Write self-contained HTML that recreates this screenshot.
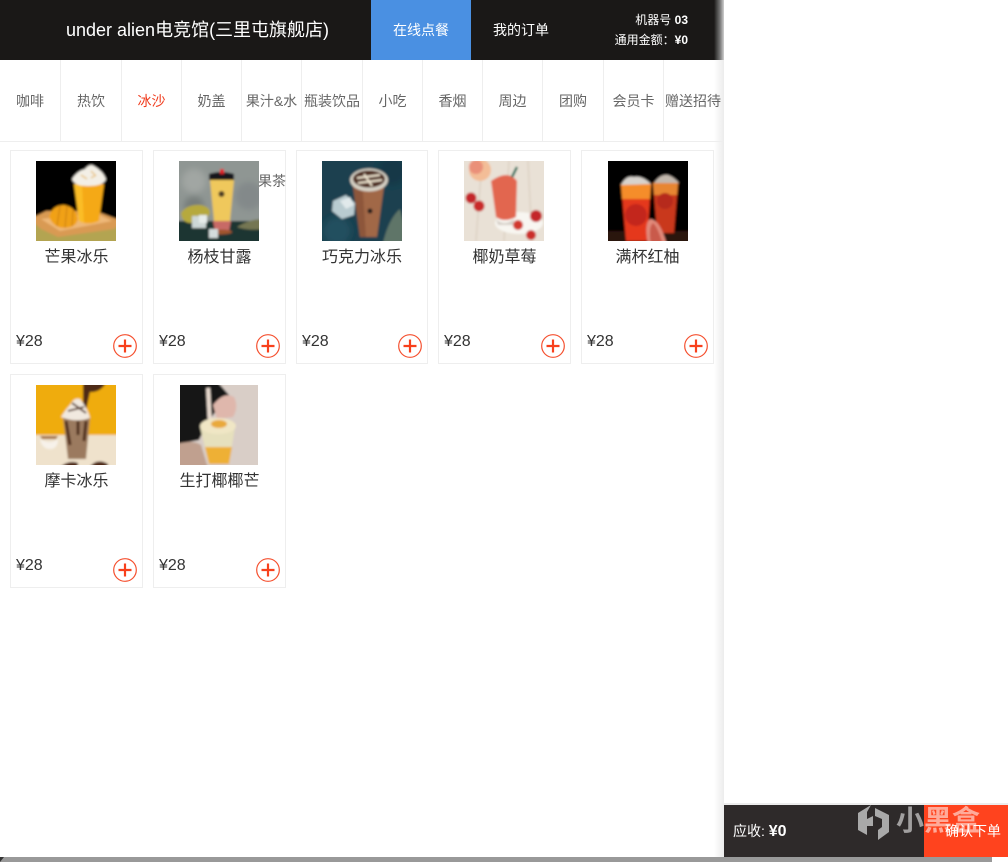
<!DOCTYPE html>
<html lang="zh">
<head>
<meta charset="utf-8">
<title>under alien</title>
<style>
*{box-sizing:border-box;margin:0;padding:0}
html,body{width:1008px;height:862px;overflow:hidden;background:#fff}
body{position:relative;font-family:"Liberation Sans","WenQuanYi Zen Hei","Noto Sans CJK SC",sans-serif}
.a{position:absolute}
#hdr{left:0;top:0;width:724px;height:60px;background:#1a1817;color:#fff}
#shade{left:714px;top:0;width:10px;height:60px;background:linear-gradient(90deg,#1a1817,#777 60%,#d0d0d0)}
#nav{left:0;top:60px;width:724px;height:82px;border-bottom:1px solid #eee}
.n{position:absolute;top:0;height:81px;line-height:82px;border-right:1px solid #eee;text-align:center;font-size:14px;color:#666;white-space:nowrap}
#sh{left:714px;top:60px;width:10px;height:797px;background:linear-gradient(90deg,#fff,#ececec)}
.card{position:absolute;width:133px;height:214px;border:1px solid #eee;background:#fff}
.card svg.p{position:absolute;left:25px;top:10px;width:80px;height:80px;display:block;overflow:hidden}
.nm{position:absolute;left:0;right:0;top:96px;text-align:center;font-size:16px;line-height:22px;color:#333;white-space:nowrap}
.pr{position:absolute;left:5px;top:181px;font-size:16px;line-height:20px;color:#333}
.pl{position:absolute;left:102px;top:183px;width:24px;height:24px}
</style>
</head>
<body>
<div id="hdr" class="a">
<div class="a" style="left:66px;top:18px;font-size:18px;line-height:24px;white-space:nowrap">under alien电竞馆(三里屯旗舰店)</div>
<div class="a" style="left:371px;top:0;width:100px;height:60px;background:#4a90e2;text-align:center;line-height:60px;font-size:14px">在线点餐</div>
<div class="a" style="left:471px;top:0;width:100px;height:60px;text-align:center;line-height:60px;font-size:14px">我的订单</div>
<div class="a" style="left:588px;top:10px;width:100px;text-align:right;font-size:12px;line-height:20px;white-space:nowrap">机器号 <b>03</b><br>通用金额：<b>¥0</b></div>
</div>
<div id="shade" class="a"></div>
<div id="sh" class="a"></div>
<div id="nav" class="a">
<div class="n" style="left:0;width:61px">咖啡</div>
<div class="n" style="left:61px;width:61px">热饮</div>
<div class="n" style="left:122px;width:60px;color:#f03c1e">冰沙</div>
<div class="n" style="left:182px;width:60px">奶盖</div>
<div class="n" style="left:242px;width:60px">果汁&amp;水</div>
<div class="n" style="left:302px;width:61px">瓶装饮品</div>
<div class="n" style="left:363px;width:60px">小吃</div>
<div class="n" style="left:423px;width:60px">香烟</div>
<div class="n" style="left:483px;width:60px">周边</div>
<div class="n" style="left:543px;width:61px">团购</div>
<div class="n" style="left:604px;width:60px">会员卡</div>
<div class="n" style="left:664px;width:58px;border-right:0">赠送招待</div>
</div>

<svg width="0" height="0" style="position:absolute"><defs>
<filter id="b1" x="-10%" y="-10%" width="120%" height="120%"><feGaussianBlur stdDeviation="1"/></filter>
<filter id="b3"><feGaussianBlur stdDeviation="3"/></filter>
<symbol id="plus" viewBox="0 0 24 24"><circle cx="12" cy="12" r="11.3" fill="#fff" stroke="#f5502f" stroke-width="1.2"/><path d="M5.5 12h13M12 5.5v13" stroke="#f8401c" stroke-width="2.2" fill="none"/></symbol>
</defs></svg>

<div class="card" style="left:10px;top:150px">
<svg class="p" viewBox="0 0 80 80"><g filter="url(#b1)">
<rect x="-6" y="-6" width="92" height="92" fill="#050505"/>
<rect x="-6" y="62" width="92" height="24" fill="#b3a451"/>
<path d="M-6 58L10 50L60 50L86 60L78 68L22 76L5 68Z" fill="#d99a52"/>
<path d="M5 58L60 52L76 60L24 70Z" fill="#eeb878"/>
<path d="M38 23H68L63 60Q52 65 43 60Z" fill="#f5a914"/>
<path d="M38 23H46L48 62L43 60Z" fill="#fbbd26"/>
<path d="M36 18Q41 10 49 8Q54 2 58 5Q67 10 70 18Q68 25 52 25Q38 25 36 18Z" fill="#f3efe6"/>
<path d="M45 14l6 4M55 10l5 5M60 14l-5 3" stroke="#e9c484" stroke-width="1.500"/>
<path d="M13 56Q16 44 28 44Q40 46 42 58Q40 67 28 67Q18 67 13 56Z" fill="#f1a113"/>
<path d="M24 45L21 65M31 45L29 67M37 49L36 65" stroke="#c67b0c" stroke-width="1"/>
</g></svg>
<div class="nm">芒果冰乐</div><div class="pr">¥28</div><svg class="pl"><use href="#plus"/></svg>
</div>

<div class="card" style="left:153px;top:150px">
<svg class="p" viewBox="0 0 80 80"><g filter="url(#b1)">
<rect x="-6" y="-6" width="92" height="92" fill="#8f9693"/>
<g filter="url(#b3)"><circle cx="15" cy="20" r="12" fill="#a1a6a3"/><circle cx="70" cy="35" r="14" fill="#83898a"/><circle cx="15" cy="45" r="10" fill="#777e7c"/></g>
<path d="M-6 60H86V86H-6Z" fill="#1e3432"/>
<path d="M2 52Q8 43 22 44Q31 46 31 52Q28 60 12 62Q3 62 2 52Z" fill="#b6a93c"/>
<path d="M31 19H55L50 70H36Z" fill="#efc85b"/>
<path d="M34 60H52L50 70H36Z" fill="#c86a66"/>
<ellipse cx="42" cy="71" rx="11" ry="2.500" fill="#a0552f"/>
<path d="M30 13Q42 9 55 13V19H30Z" fill="#16181b"/>
<rect x="41" y="8" width="4" height="5" fill="#e01f22"/>
<circle cx="42.500" cy="33" r="3" fill="#4a3a25"/>
<rect x="13" y="55" width="14" height="12" fill="#cdd7d6"/><rect x="20" y="54" width="8" height="8" fill="#e6ecea"/><rect x="30" y="68" width="9" height="9" fill="#d4dcdc"/>
<path d="M58 66Q70 58 86 58V68Q68 70 58 66Z" fill="#747652"/>
</g></svg>
<div class="nm">杨枝甘露</div><div class="pr">¥28</div><svg class="pl"><use href="#plus"/></svg>
</div>
<div class="a" style="left:258px;top:172px;font-size:14px;line-height:18px;color:#666;white-space:nowrap">果茶</div>

<div class="card" style="left:296px;top:150px;width:132px">
<svg class="p" viewBox="0 0 80 80"><g filter="url(#b1)">
<rect x="-6" y="-6" width="92" height="92" fill="#1a4150"/>
<g filter="url(#b3)"><circle cx="15" cy="70" r="14" fill="#234f5e"/><circle cx="70" cy="10" r="14" fill="#143846"/></g>
<path d="M30 18H63L55 76H38Z" fill="#a16747"/>
<path d="M30 18H40L44 76H38Z" fill="#8d573b"/>
<ellipse cx="47" cy="19" rx="19" ry="11.500" fill="#d7d1c5"/>
<ellipse cx="47" cy="18" rx="16" ry="8.500" fill="#4d2c1f"/>
<path d="M35 17L58 14M36 22L60 19M42 13L50 25" stroke="#efe5d0" stroke-width="2"/>
<circle cx="48" cy="50" r="2.500" fill="#1c1c1c"/>
<path d="M11 40L24 34L33 42L32 54L20 58L10 50Z" fill="#b9cbd0"/>
<path d="M18 40L28 36L32 44L24 48Z" fill="#e1e9eb"/>
<path d="M60 86Q66 58 78 48L86 80Z" fill="#5e7568"/>
</g></svg>
<div class="nm">巧克力冰乐</div><div class="pr">¥28</div><svg class="pl" style="left:101px"><use href="#plus"/></svg>
</div>

<div class="card" style="left:438px;top:150px">
<svg class="p" viewBox="0 0 80 80"><g filter="url(#b1)">
<rect x="-6" y="-6" width="92" height="92" fill="#e9e1d6"/>
<path d="M18 0L12 80M45 0L40 80M64 0L68 80" stroke="#d5c9ba" stroke-width="1"/>
<circle cx="16" cy="9" r="11" fill="#f3bd97"/><circle cx="12" cy="6" r="7" fill="#ea9079"/>
<ellipse cx="55" cy="62" rx="24" ry="11" fill="#f8f6f1"/>
<path d="M27 20Q44 8 53 20L52 56Q40 62 32 56Z" fill="#e2664f"/>
<path d="M48 16L53 6" stroke="#0a6b52" stroke-width="2.500"/>
<path d="M32 58Q40 66 50 58L49 64H34Z" fill="#d6cfc7"/>
<circle cx="7" cy="37" r="5.500" fill="#c4262a"/><circle cx="15" cy="45" r="5.500" fill="#c92b2c"/>
<circle cx="72" cy="55" r="6" fill="#c4282a"/><circle cx="54" cy="64" r="5" fill="#d1382f"/><circle cx="67" cy="74" r="5" fill="#cb2d2c"/>
</g></svg>
<div class="nm">椰奶草莓</div><div class="pr">¥28</div><svg class="pl"><use href="#plus"/></svg>
</div>

<div class="card" style="left:581px;top:150px">
<svg class="p" style="left:26px" viewBox="0 0 80 80"><g filter="url(#b1)">
<rect x="-6" y="-6" width="92" height="92" fill="#030204"/>
<rect x="-6" y="70" width="92" height="16" fill="#2c120c"/>
<path d="M13 23H43L39 80H18Z" fill="#e5391a"/>
<path d="M13 23H43L42 38H14Z" fill="#f58d2a"/>
<path d="M45 22H70L66 72H49Z" fill="#c9371b"/>
<path d="M45 22H70L69 34H46Z" fill="#e78631"/>
<path d="M13 24Q18 14 26 16Q34 14 43 23Z" fill="#d7d3cd"/>
<path d="M46 22Q52 13 60 14Q66 16 71 22Z" fill="#c2b8ad"/>
<circle cx="28" cy="54" r="11" fill="#c3281a"/>
<circle cx="57" cy="40" r="8" fill="#b62c1a"/>
<path d="M40 84Q36 62 42 58Q52 58 59 84Z" fill="#e28a7a"/>
<path d="M43 84Q40 66 45 62Q50 66 55 84Z" fill="#c95a4b"/>
</g></svg>
<div class="nm">满杯红柚</div><div class="pr">¥28</div><svg class="pl"><use href="#plus"/></svg>
</div>

<div class="card" style="left:10px;top:374px">
<svg class="p" viewBox="0 0 80 80"><g filter="url(#b1)">
<rect x="-6" y="-6" width="92" height="56" fill="#efac09"/>
<rect x="-6" y="50" width="92" height="36" fill="#efe2cc"/>
<path d="M47 -6H72Q66 8 54 7L49 30H47Z" fill="#4e2917"/>
<path d="M27 32H54L50 74H32Z" fill="#9b7a5e"/>
<path d="M30 36L34 60M42 36V50M50 36L48 56" stroke="#4e2917" stroke-width="3"/>
<path d="M25 32Q30 24 34 20Q38 12 44 14Q52 24 54 33Q40 38 25 32Z" fill="#f1e9df"/>
<path d="M32 26L48 22M36 18L50 28" stroke="#4e2917" stroke-width="1.800"/>
<path d="M4 54Q14 60 22 54Q22 64 14 64Q6 64 4 54Z" fill="#f7f2ea"/>
<path d="M4 51H22L20 54H6Z" fill="#a46f3b"/>
<path d="M22 84Q32 74 42 78V84ZM52 84Q60 72 72 79V84Z" fill="#512a18"/>
</g></svg>
<div class="nm">摩卡冰乐</div><div class="pr">¥28</div><svg class="pl"><use href="#plus"/></svg>
</div>

<div class="card" style="left:153px;top:374px">
<svg class="p" viewBox="0 0 80 80"><rect width="80" height="80" fill="#fff"/><svg x="1" y="0" width="78" height="80" viewBox="1 0 78 80"><g filter="url(#b1)">
<rect x="-6" y="-6" width="92" height="92" fill="#171717"/>
<path d="M36 -6H86V86H-6V60L20 55L30 35L50 10Z" fill="#d9cec7"/>
<path d="M-6 60Q14 54 22 60L30 86H-6Z" fill="#c0a08f"/>
<path d="M34 20Q45 6 55 12Q60 22 54 32L38 34Z" fill="#dfb7ac"/>
<rect x="28" y="3" width="4" height="32" fill="#eadcd0" transform="rotate(-3 30 20)"/>
<path d="M21 42H56L50 79H30Z" fill="#e6e0bd"/>
<path d="M26 62H53L50 79H30Z" fill="#eeb035"/>
<ellipse cx="39" cy="41" rx="18" ry="8" fill="#f0e6c5"/>
<ellipse cx="40" cy="39" rx="8" ry="4" fill="#e9a93a"/>
</g></svg></svg>
<div class="nm">生打椰椰芒</div><div class="pr">¥28</div><svg class="pl"><use href="#plus"/></svg>
</div>

<div class="a" style="left:724px;top:803px;width:284px;height:2px;background:#ececec"></div>
<div class="a" style="left:724px;top:805px;width:200px;height:52px;background:#2e2a2a;color:#fff;font-size:14px;line-height:52px;padding-left:9px">应收: <b style="font-size:16px">¥0</b></div>
<div class="a" style="left:924px;top:805px;width:84px;height:52px;background:#ff431e"></div>
<svg class="a" style="left:856px;top:802px" width="36" height="40" viewBox="0 0 36 40"><path d="M15 3L2 11V28L11 33V24H17V14L11 17V10ZM19 6L33 13V30L22 38V28L26 25V17L19 14Z" fill="#a9a9a9"/></svg>
<div class="a" style="left:896px;top:802px;font-size:28px;line-height:38px;font-weight:bold;color:#fff;opacity:.55;white-space:nowrap">小黑盒</div>
<div class="a" style="left:924px;top:805px;width:84px;height:52px;color:#fff;font-size:14px;line-height:52px;text-align:center;padding-left:14px;white-space:nowrap">确认下单</div>
<div class="a" style="left:0;top:857px;width:992px;height:5px;background:#999"></div>
<div class="a" style="left:0;top:857px;width:0;height:0;border-top:5px solid #333;border-right:4px solid transparent"></div>
<div class="a" style="left:992px;top:857px;width:16px;height:5px;background:#fff"></div>
</body>
</html>
